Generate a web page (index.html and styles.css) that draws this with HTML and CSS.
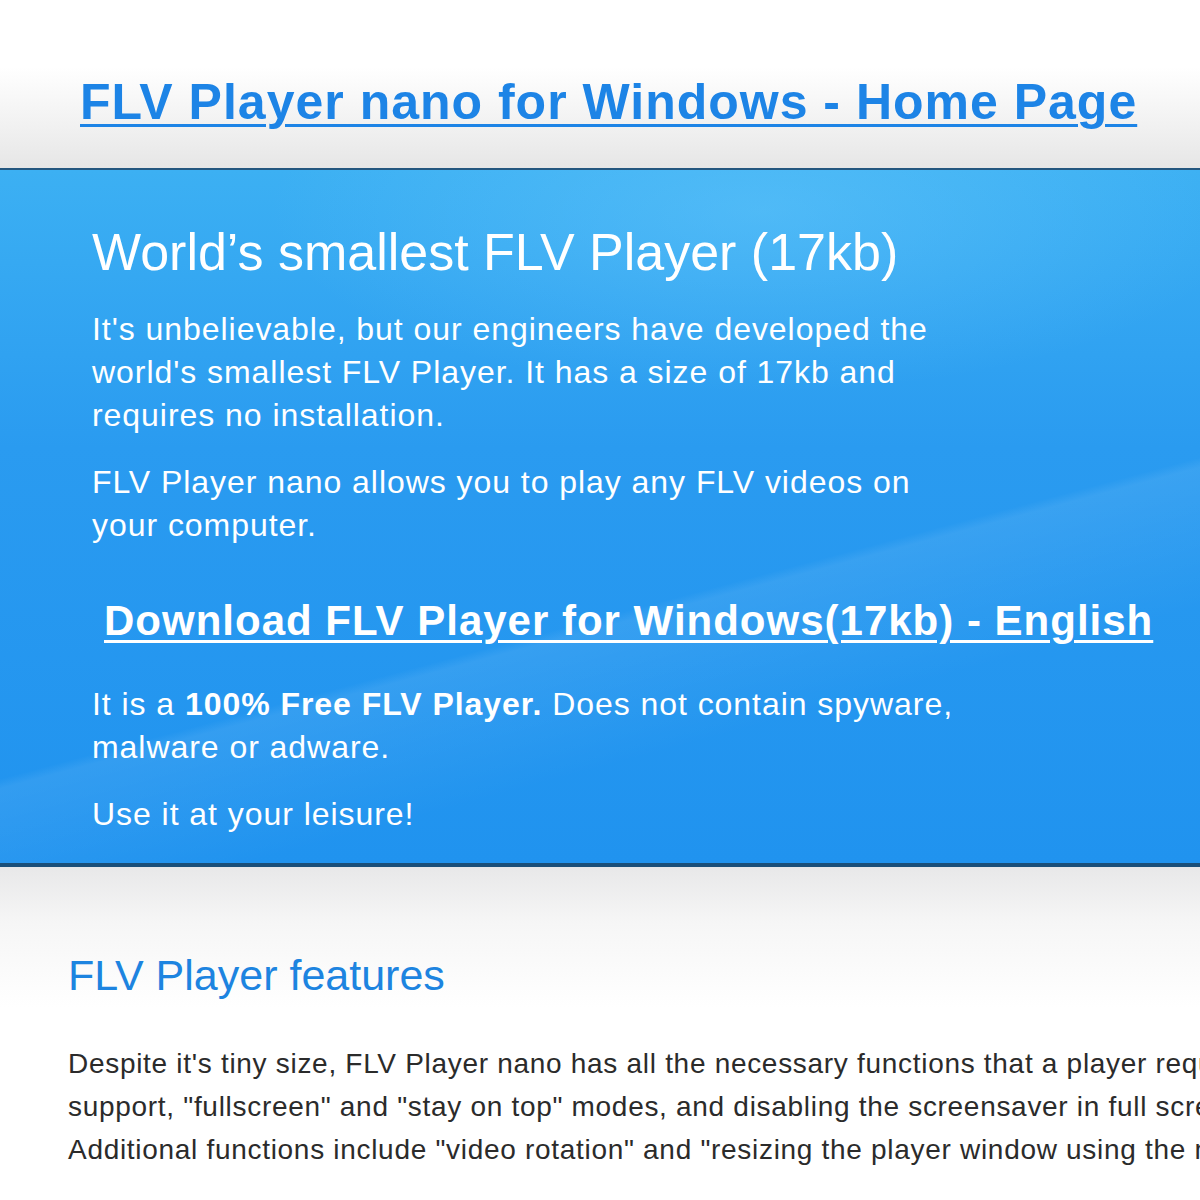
FILE: index.html
```html
<!DOCTYPE html>
<html lang="en">
<head>
    <meta charset="UTF-8">
    <title>FLV Player nano for Windows</title>
    <link rel="stylesheet" href="styles.css">
</head>
<body>

<div class="header">
    <a href="#" class="site-title">FLV Player nano for Windows - Home Page</a>
</div>

<div class="hero">
    <div class="hero-inner">
        <h1>World’s smallest FLV Player (17kb)</h1>
        <p>It's unbelievable, but our engineers have developed the<br>
        world's smallest FLV Player. It has a size of 17kb and<br>
        requires no installation.</p>
        <p>FLV Player nano allows you to play any FLV videos on<br>
        your computer.</p>
        <a href="#" class="download">Download FLV Player for Windows(17kb) - English</a>
        <p>It is a <b>100% Free FLV Player.</b> Does not contain spyware,<br>
        malware or adware.</p>
        <p>Use it at your leisure!</p>
    </div>
</div>

<div class="features">
    <h2>FLV Player features</h2>
    <p class="features-text">Despite it's tiny size, FLV Player nano has all the necessary functions that a player requires: playlist<br>
    support, "fullscreen" and "stay on top" modes, and disabling the screensaver in full screen mode.<br>
    Additional functions include "video rotation" and "resizing the player window using the mouse".</p>
</div>

</body>
</html>
```

FILE: styles.css
```css
body {
    margin: 0;
    font-family: "Liberation Sans", Arial, sans-serif;
    background: #fff;
    overflow: hidden;
}
.header {
    height: 170px;
    background: linear-gradient(to bottom, #ffffff 0%, #ffffff 40%, #f1f1f1 75%, #e6e6e6 100%);
    border-bottom: 2px solid #24577f;
    box-sizing: border-box;
    padding-top: 73px;
    padding-left: 80px;
}
.site-title {
    font-size: 50px;
    font-weight: bold;
    color: #1d84e6;
    letter-spacing: 1px;
    text-decoration: underline;
    text-decoration-thickness: 3px;
    text-underline-offset: 5px;
    white-space: nowrap;
}
.hero {
    height: 697px;
    box-sizing: border-box;
    background:
        radial-gradient(ellipse 700px 260px at 760px 40px, rgba(120, 210, 255, 0.35), rgba(120, 210, 255, 0) 70%),
        linear-gradient(165deg, rgba(255,255,255,0) 60%, rgba(255,255,255,0.08) 61%, rgba(255,255,255,0) 75%),
        linear-gradient(to bottom, #3cb0f3 0%, #2a9bf0 40%, #2093ef 100%);
    border-bottom: 4px solid #1a4f7a;
    color: #fff;
}
.hero-inner {
    padding: 52px 0 0 92px;
}
.hero h1 {
    margin: 0 0 26px;
    font-size: 52px;
    font-weight: normal;
}
.hero p {
    margin: 0 0 24px;
    font-size: 32px;
    line-height: 43px;
    letter-spacing: 0.95px;
    white-space: nowrap;
}
.download {
    display: block;
    margin: 50px 0 38px 12px;
    font-size: 42px;
    font-weight: bold;
    color: #fff;
    white-space: nowrap;
    letter-spacing: 1px;
    text-decoration-thickness: 3px;
    text-underline-offset: 5px;
}
.features {
    background: linear-gradient(to bottom, #e8e8e9 0%, #f6f6f6 40%, #ffffff 100%);
    background-size: 100% 140px;
    background-repeat: no-repeat;
    padding: 84px 0 0 68px;
}
.features h2 {
    margin: 0 0 42px;
    font-size: 43px;
    font-weight: normal;
    color: #1d84e0;
}
.features-text {
    margin: 0;
    font-size: 28px;
    line-height: 43px;
    color: #2b2b2b;
    letter-spacing: 0.7px;
    white-space: nowrap;
}
```
